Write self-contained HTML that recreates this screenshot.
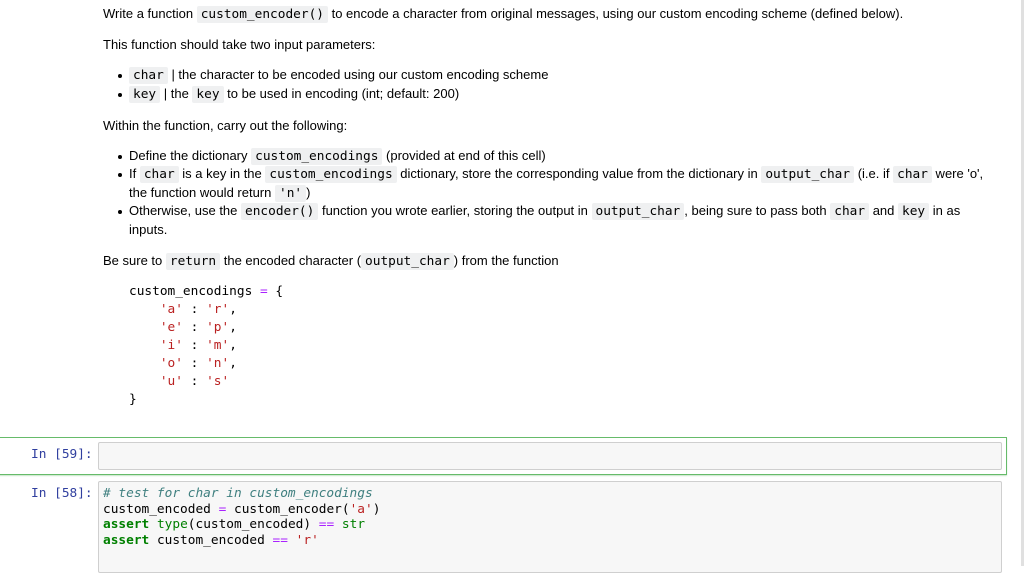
<!DOCTYPE html>
<html><head><meta charset="utf-8"><style>
body{margin:0;width:1024px;height:566px;overflow:hidden;background:#fff;font-family:"Liberation Sans",Arial,sans-serif;font-size:13px;color:#000;position:relative}
.a{position:absolute;white-space:pre}
code,.m{font-family:"DejaVu Sans Mono","Liberation Mono",monospace;font-size:12.8px}
code{background:#eff0f1;padding:1px 4px;border-radius:2px}
.dot{position:absolute;width:4px;height:4px;border-radius:2px;background:#000}
.s{color:#ba2121}.o{color:#aa22ff}.k{color:#008000;font-weight:bold}.b{color:#008000}.c{color:#408080;font-style:italic}
.p{color:#303f9f;font-family:"DejaVu Sans Mono","Liberation Mono",monospace;font-size:12.8px}
</style></head><body>
<div class="a" style="left:103px;top:6px">Write a function <code>custom_encoder()</code> to encode a character from original messages, using our custom encoding scheme (defined below).</div>
<div class="a" style="left:103px;top:37px">This function should take two input parameters:</div>
<div class="dot" style="left:118px;top:74px"></div>
<div class="a" style="left:129px;top:67px"><code>char</code> | the character to be encoded using our custom encoding scheme</div>
<div class="dot" style="left:118px;top:93px"></div>
<div class="a" style="left:129px;top:86px"><code>key</code> | the <code>key</code> to be used in encoding (int; default: 200)</div>
<div class="a" style="left:103px;top:118px">Within the function, carry out the following:</div>
<div class="dot" style="left:118px;top:155px"></div>
<div class="a" style="left:129px;top:148px">Define the dictionary <code>custom_encodings</code> (provided at end of this cell)</div>
<div class="dot" style="left:118px;top:173px"></div>
<div class="a" style="left:129px;top:166px">If <code>char</code> is a key in the <code>custom_encodings</code> dictionary, store the corresponding value from the dictionary in <code>output_char</code> (i.e. if <code>char</code> were 'o',</div>
<div class="a" style="left:129px;top:185px">the function would return <code>'n'</code>)</div>
<div class="dot" style="left:118px;top:210px"></div>
<div class="a" style="left:129px;top:203px">Otherwise, use the <code>encoder()</code> function you wrote earlier, storing the output in <code>output_char</code>, being sure to pass both <code>char</code> and <code>key</code> in as</div>
<div class="a" style="left:129px;top:222px">inputs.</div>
<div class="a" style="left:103px;top:253px">Be sure to <code>return</code> the encoded character (<code>output_char</code>) from the function</div>
<div class="a m" style="left:129px;top:283px;line-height:18px">custom_encodings <span class="o">=</span> {
    <span class="s">'a'</span> : <span class="s">'r'</span>,
    <span class="s">'e'</span> : <span class="s">'p'</span>,
    <span class="s">'i'</span> : <span class="s">'m'</span>,
    <span class="s">'o'</span> : <span class="s">'n'</span>,
    <span class="s">'u'</span> : <span class="s">'s'</span>
}</div>
<div style="position:absolute;left:-2px;top:437px;width:1008px;height:36px;border:1px solid #66bb6a;border-left:none;box-shadow:0 1px 1px #c8e6c9"></div>
<div class="a p" style="left:31px;top:447px">In [59]:</div>
<div style="position:absolute;left:98px;top:442px;width:902px;height:26px;background:#f7f7f7;border:1px solid #cfcfcf;border-radius:2px"></div>
<div class="a p" style="left:31px;top:486px">In [58]:</div>
<div style="position:absolute;left:98px;top:481px;width:902px;height:90px;background:#f7f7f7;border:1px solid #cfcfcf;border-radius:2px"></div>
<div class="a m" style="left:103px;top:486px;line-height:15.7px"><span class="c"># test for char in custom_encodings</span>
custom_encoded <span class="o">=</span> custom_encoder(<span class="s">'a'</span>)
<span class="k">assert</span> <span class="b">type</span>(custom_encoded) <span class="o">==</span> <span class="b">str</span>
<span class="k">assert</span> custom_encoded <span class="o">==</span> <span class="s">'r'</span></div>
<div style="position:absolute;left:1021px;top:0;width:3px;height:566px;background:#e0e0e0"></div>
</body></html>
